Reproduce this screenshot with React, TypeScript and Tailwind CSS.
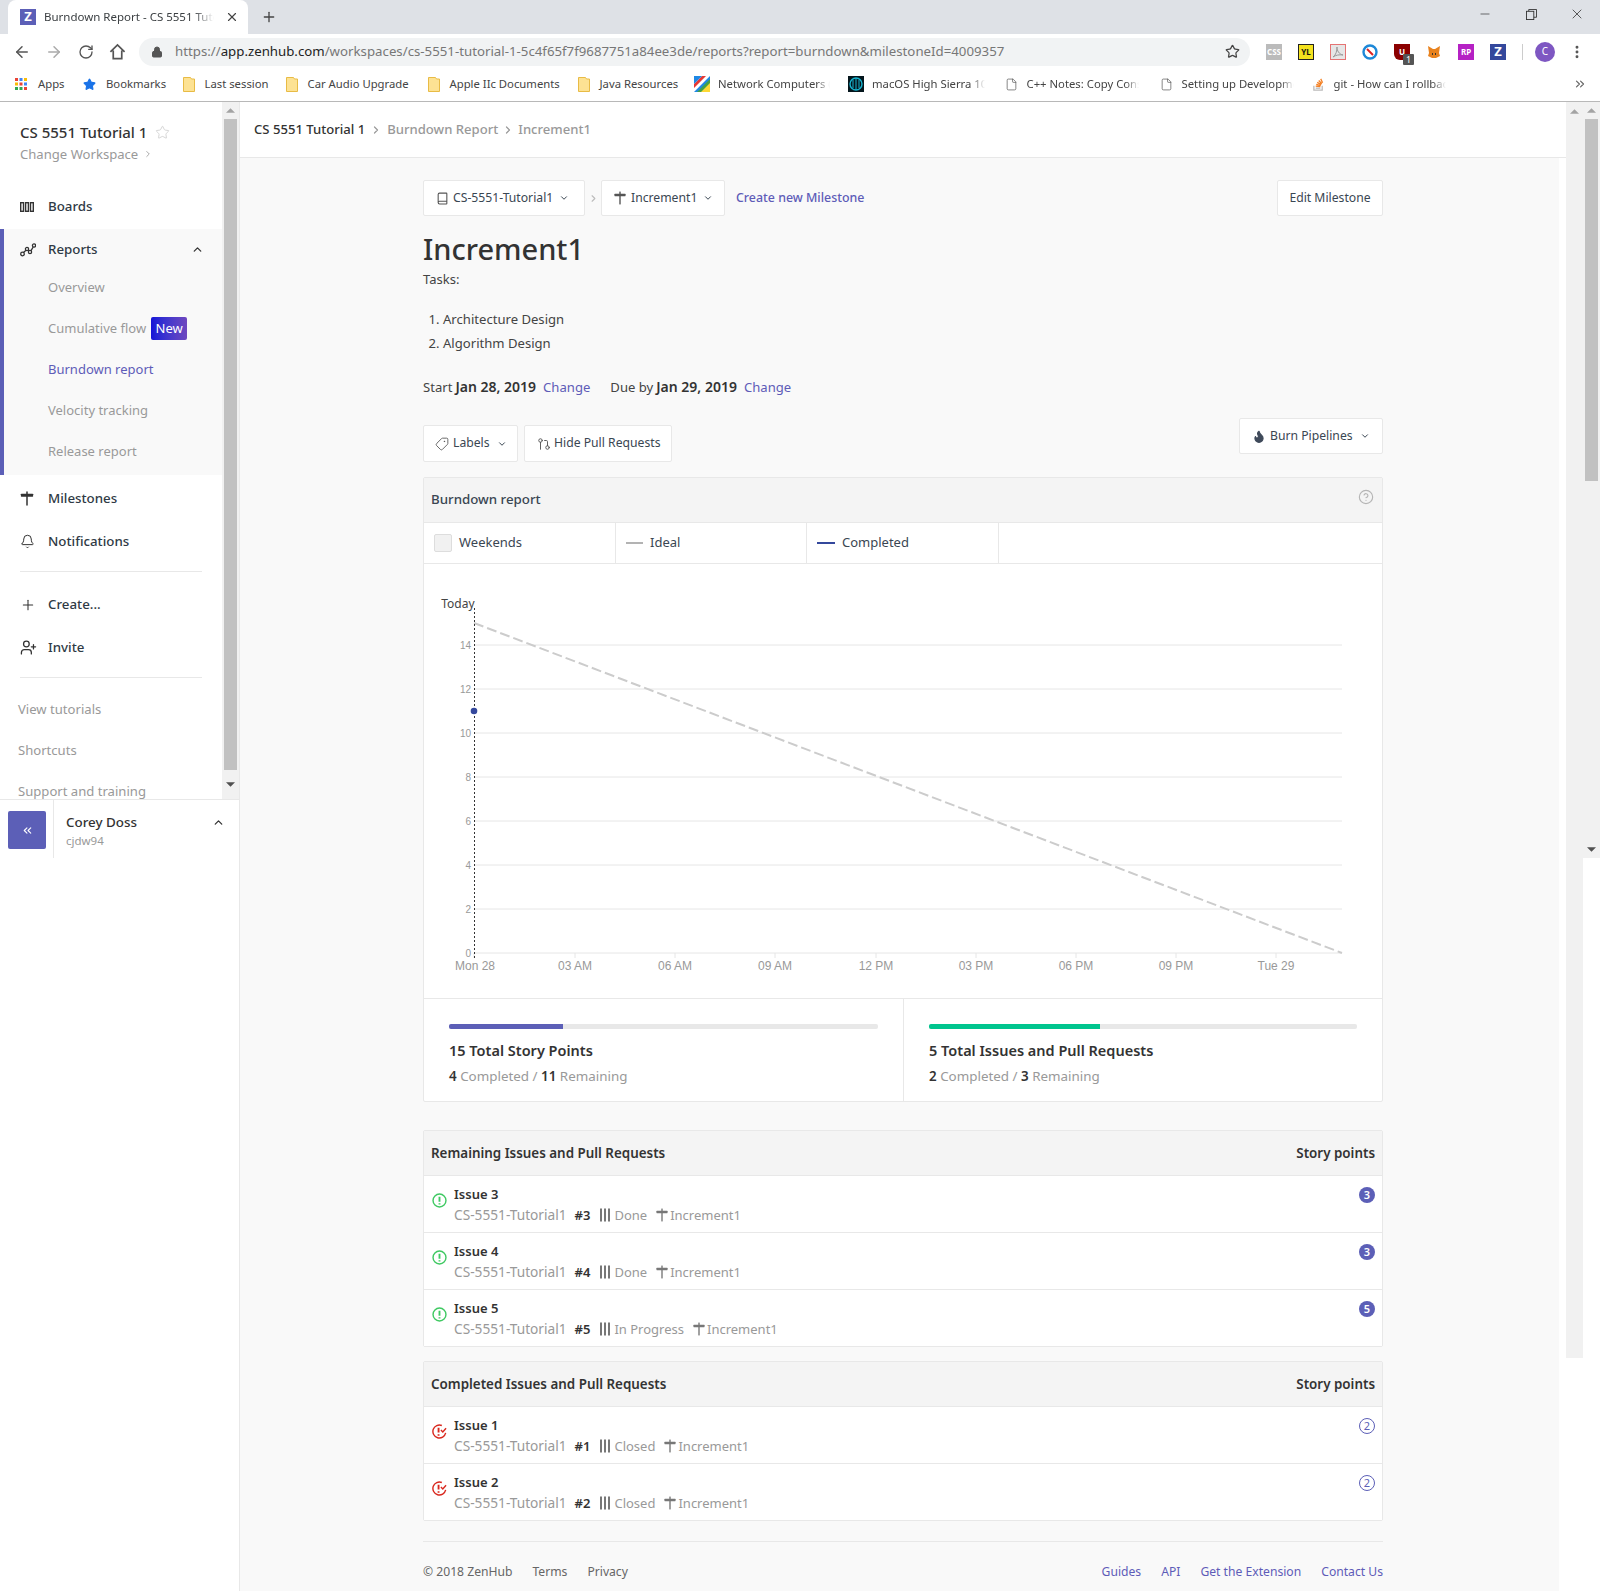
import React from "react";
import { ArrowLeft, ArrowRight, RotateCw, Lock, Star, X, Plus, Minus, ChevronDown, ChevronUp, ChevronRight, File, EllipsisVertical, Book, Tag, GitPullRequest, Flame, Bell, ChevronsLeft, UserPlus, CircleHelp, ChevronsRight } from "lucide-react";

const Signpost = ({ className = "" }: { className?: string }) => (
  <svg viewBox="0 0 14 16" className={className} fill="currentColor"><rect x="0.5" y="3" width="13" height="3" rx="0.5" /><rect x="6.2" y="0.5" width="1.6" height="15" /></svg>
);
const Bars = () => (
  <svg viewBox="0 0 10 14" className="w-[10px] h-[14px] shrink-0" fill="#777"><rect x="0" y="0.5" width="2" height="13" /><rect x="4" y="0.5" width="2" height="13" /><rect x="8" y="0.5" width="2" height="13" /></svg>
);
const OpenIcon = () => (
  <svg viewBox="0 0 16 16" className="w-[15px] h-[15px]" fill="none" stroke="#3fc962" strokeWidth="1.5"><circle cx="8" cy="8" r="6.9" /><path d="M8 4v5.2M8 10.8v1.5" strokeWidth="2" /></svg>
);
const ClosedIcon = () => (
  <svg viewBox="0 0 16 16" className="w-[15px] h-[15px]" fill="none" stroke="#d9281e" strokeWidth="1.5"><path d="M14.6 9.5A6.9 6.9 0 1 1 10.5 1.6" /><path d="M7 4v5M7 10.8v1.6" strokeWidth="2" /><path d="M9.5 6.5l2 2 3.5-4" /></svg>
);
const BmFolder = () => (
  <svg viewBox="0 0 12 15" className="w-[12px] h-[15px] shrink-0"><path d="M0.5 0.5h7l1 1.5h3v12.5h-11z" fill="#fde293" stroke="#e8bb45" /></svg>
);

const bookmarks = [
  { t: "Last session", w: "w-[103px]", tw: "w-[70px]" },
  { t: "Car Audio Upgrade", w: "w-[142px]", tw: "w-[110px]" },
  { t: "Apple IIc Documents", w: "w-[150px]", tw: "w-[118px]" },
  { t: "Java Resources", w: "w-[116.5px]", tw: "w-[90px]" },
];
const fade = "overflow-hidden [mask-image:linear-gradient(to_right,black_88%,transparent)]";

const Bookmarks = () => (
  <div className="h-[32px] flex items-center text-[11.3px] text-[#444] whitespace-nowrap border-b border-[#b8b8b8] pl-[15px] pb-[1px] box-content">
    <div className="w-[68px] flex items-center gap-[11px]">
      <svg viewBox="0 0 12 12" className="w-[12px] h-[12px]">
        {[0, 4.5, 9].map((x, i) => [0, 4.5, 9].map((y, j) => (
          <rect key={`${i}${j}`} x={x} y={y} width="3" height="3" fill={["#ea4335", "#fbbc05", "#34a853", "#4285f4", "#ea4335", "#34a853", "#fbbc05", "#4285f4", "#ea4335"][i * 3 + j]} />
        )))}
      </svg>
      <span>Apps</span>
    </div>
    <div className="w-[99.5px] flex items-center gap-[10px]">
      <Star className="w-[13px] h-[13px] text-[#1a73e8]" fill="#1a73e8" />
      <span>Bookmarks</span>
    </div>
    {bookmarks.map((b) => (
      <div key={b.t} className={`${b.w} flex items-center gap-[10px]`}>
        <BmFolder />
        <span className={`${b.tw}`}>{b.t}</span>
      </div>
    ))}
    <div className="w-[154px] flex items-center gap-[8px]">
      <svg viewBox="0 0 16 16" className="w-[16px] h-[16px] shrink-0"><rect width="16" height="16" fill="#fff" /><path d="M0 16V8L8 0h4L0 12z" fill="#e53935" /><path d="M0 8L8 0H0z" fill="#1e88e5" /><path d="M0 16L16 0v6L6 16z" fill="#1e88e5" /><path d="M6 16L16 6v10z" fill="#fdd835" /><path d="M3 16L16 3v4L7 16z" fill="#43a047" /></svg>
      <span className={`w-[112px] ${fade}`}>Network Computers (</span>
    </div>
    <div className="w-[156.5px] flex items-center gap-[8px]">
      <svg viewBox="0 0 16 16" className="w-[16px] h-[16px] shrink-0"><rect width="16" height="16" fill="#04151c" /><circle cx="8" cy="8" r="6" fill="none" stroke="#16b4cf" strokeWidth="1.4" /><path d="M8 2v12M5 4v8M11 4v8" stroke="#16b4cf" /></svg>
      <span className={`w-[113px] ${fade}`}>macOS High Sierra 10.13</span>
    </div>
    <div className="w-[155px] flex items-center gap-[9px]">
      <File className="w-[13px] h-[15px] text-[#555] shrink-0" strokeWidth={1.3} />
      <span className={`w-[112px] ${fade}`}>C++ Notes: Copy Constructor</span>
    </div>
    <div className="w-[152px] flex items-center gap-[9px]">
      <File className="w-[13px] h-[15px] text-[#555] shrink-0" strokeWidth={1.3} />
      <span className={`w-[112px] ${fade}`}>Setting up Development</span>
    </div>
    <div className="w-[261px] flex items-center gap-[9px]">
      <svg viewBox="0 0 14 16" className="w-[13px] h-[16px] shrink-0" fill="none" strokeWidth="1.4"><path d="M2 10v4.5h9V10" stroke="#bcbbbb" /><path d="M4 12.5h5" stroke="#bcbbbb" /><path d="M4 10.3l5 .6M4.6 8.3l4.8 1.4M5.6 6.2l4.4 2.4M7.2 4.3l3.4 3.4M9.4 2.5l2 4.2" stroke="#f48024" /></svg>
      <span className={`w-[112px] ${fade}`}>git - How can I rollback a</span>
    </div>
    <ChevronsRight className="w-[14px] h-[14px] text-[#666]" />
  </div>
);

const Ext = ({ children, cls }: { children?: React.ReactNode; cls: string }) => (
  <div className={`w-[16px] h-[16px] flex items-center justify-center text-[8px] font-bold leading-none ${cls}`}>{children}</div>
);

const BrowserChrome = () => (
  <div className="shrink-0">
    <div className="h-[34px] bg-[#dee1e6] flex items-stretch pl-[8px] relative">
      <div className="w-[240px] bg-white rounded-t-[8px] flex items-center pl-[12px] pr-[9px] text-[11.5px] text-[#3c4043] whitespace-nowrap">
        <div className="w-[16px] h-[16px] bg-[#5c5fb7] text-white text-[13px] font-bold flex items-center justify-center shrink-0">Z</div>
        <span className={`ml-[8px] w-[170px] ${fade}`}>Burndown Report - CS 5551 Tutorial 1</span>
        <X className="w-[14px] h-[14px] text-[#444] ml-[11px] shrink-0" />
      </div>
      <Plus className="w-[16px] h-[16px] text-[#444] ml-[13px] self-center" />
      <div className="ml-auto flex items-center pb-[6px] text-[#333]">
        <Minus className="w-[14px] h-[14px]" strokeWidth={1.2} />
        <svg viewBox="0 0 12 12" className="w-[11px] h-[11px] ml-[34px]" fill="none" stroke="currentColor"><rect x="0.5" y="2.5" width="8" height="9" /><path d="M3 2.5V.5h8.5v8.5h-3" /></svg>
        <X className="w-[16px] h-[16px] ml-[32px] mr-[15px]" strokeWidth={1.2} />
      </div>
    </div>
    <div className="h-[34px] bg-white flex items-center text-[#555] pt-[1px]">
      <ArrowLeft className="w-[18px] h-[18px] ml-[13px]" strokeWidth={2} />
      <ArrowRight className="w-[18px] h-[18px] ml-[14px] text-[#aaa]" strokeWidth={2} />
      <RotateCw className="w-[16px] h-[16px] ml-[15px]" strokeWidth={2} />
      <svg viewBox="0 0 18 18" className="w-[17px] h-[17px] ml-[15px]" fill="none" stroke="currentColor" strokeWidth="1.8"><path d="M1.5 9.5L9 2l7.5 7.5M4.5 8v8.5h9V8" /></svg>
      <div className="ml-[13px] w-[1111px] h-[28px] rounded-full bg-[#f1f3f4] flex items-center pl-[12px] text-[13.25px] whitespace-nowrap">
        <Lock className="w-[12px] h-[12px] text-[#555] shrink-0" fill="#555" />
        <span className="ml-[12px] text-[#777]">https://<span className="text-[#222]">app.zenhub.com</span>/workspaces/cs-5551-tutorial-1-5c4f65f7f9687751a84ee3de/reports?report=burndown&amp;milestoneId=4009357</span>
        <Star className="w-[15px] h-[15px] ml-auto mr-[10px] text-[#444] shrink-0" />
      </div>
      <div className="flex items-center gap-[16px] ml-[16px]">
        <Ext cls="bg-[#bbb] text-white">CSS</Ext>
        <Ext cls="bg-[#f4e21e] text-[#111] border border-[#222]">YL</Ext>
        <svg viewBox="0 0 16 16" className="w-[16px] h-[16px]"><rect x="0.5" y="0.5" width="15" height="15" fill="#e6e6e6" stroke="#e57373" /><path d="M3 13c3-2 4-6 4-10 0 4 2 7 6 8-4-.5-7 0-10 2z" fill="none" stroke="#999" /></svg>
        <svg viewBox="0 0 16 16" className="w-[16px] h-[16px]" fill="none"><circle cx="8" cy="8" r="6.5" stroke="#1d88d8" strokeWidth="2.4" /><circle cx="8" cy="8" r="4.6" fill="#fff" /><path d="M5 5l6 6" stroke="#d22" strokeWidth="2" /></svg>
        <div className="relative">
          <Ext cls="bg-[#8b0000] text-white rounded-b-[6px]">U</Ext>
          <span className="absolute left-[9px] top-[10px] w-[11px] h-[11px] bg-[#555] text-white text-[9px] leading-[11px] text-center rounded-[1px]">1</span>
        </div>
        <svg viewBox="0 0 16 16" className="w-[16px] h-[16px]"><path d="M2 2l5 3h2l5-3-1 7 1 3-4 2H6l-4-2 1-3z" fill="#e8821e" /><path d="M6 9h1v2H6zM9 9h1v2H9z" fill="#333" /></svg>
        <Ext cls="bg-[#b521c4] text-white">RP</Ext>
        <Ext cls="bg-[#34489c] text-white !text-[13px]">Z</Ext>
      </div>
      <div className="w-px h-[16px] bg-[#ccc] ml-[16px]" />
      <div className="w-[20px] h-[20px] rounded-full bg-[#7e57c2] text-white text-[10px] flex items-center justify-center ml-[12px]">C</div>
      <EllipsisVertical className="w-[16px] h-[16px] text-[#555] ml-[14px]" strokeWidth={2.4} />
    </div>
    <Bookmarks />
  </div>
);

const Arrow = ({ up, cls = "" }: { up?: boolean; cls?: string }) => (
  <svg viewBox="0 0 10 5" className={`w-[9px] h-[5px] ${cls}`} fill={up ? "#a3a3a3" : "#505050"}><path d={up ? "M5 0l5 5H0z" : "M0 0h10L5 5z"} /></svg>
);

const NavRow = ({ icon, label, cls = "h-[43px]" }: { icon: React.ReactNode; label: string; cls?: string }) => (
  <div className={`flex items-center pl-[20px] font-medium text-[13.3px] text-[#2f3a45] ${cls}`}>
    <span className="w-[28px] flex items-center text-[#333]">{icon}</span>
    {label}
  </div>
);

const Sub = ({ children, cls = "text-[#999]" }: { children: React.ReactNode; cls?: string }) => (
  <div className={`h-[41px] flex items-center pl-[44px] text-[13px] ${cls}`}>{children}</div>
);

const Sidebar = () => (
  <aside className="w-[239px] shrink-0 border-r border-[#e8e8e8] box-content bg-white flex flex-col">
    <div className="h-[697px] flex overflow-hidden">
      <div className="w-[222px] shrink-0">
        <div className="h-[84px] pl-[20px] pt-[19px]">
          <div className="flex items-center text-[15px] font-medium text-[#333] leading-[23px]">
            CS 5551 Tutorial 1
            <Star className="w-[15px] h-[15px] ml-[8px] text-[#ccc]" strokeWidth={1.3} />
          </div>
          <div className="flex items-center text-[13.1px] text-[#999] leading-[20px]">
            Change Workspace
            <ChevronRight className="w-[10px] h-[10px] ml-[5px]" />
          </div>
        </div>
        <NavRow label="Boards" cls="h-[43px] pb-[2px]" icon={
          <svg viewBox="0 0 14 10" className="w-[14px] h-[10px]" fill="none" stroke="#333" strokeWidth="1.4"><rect x="0.7" y="0.7" width="2.8" height="8.6" /><rect x="5.6" y="0.7" width="2.8" height="8.6" /><rect x="10.5" y="0.7" width="2.8" height="8.6" /></svg>
        } />
        <div className="h-[246px] border-l-[4px] border-[#5c5fb7] bg-[#f9f9f9]">
          <div className="h-[38px] pt-[3px] flex items-center -ml-[4px] pr-[18px]">
            <NavRow label="Reports" cls="flex-1 h-[38px]" icon={
              <svg viewBox="0 0 16 14" className="w-[16px] h-[14px]" fill="none" stroke="#333" strokeWidth="1.3"><circle cx="2.5" cy="11" r="1.8" /><circle cx="7" cy="6" r="1.6" /><circle cx="10" cy="9" r="1.6" /><circle cx="14" cy="2.5" r="1.6" /><path d="M3.5 9.5L6 7.3M8 7.2l1 .8M11 7.6l2.2-3.6" /></svg>
            } />
            <ChevronUp className="w-[13px] h-[13px] text-[#333]" strokeWidth={2.4} />
          </div>
          <Sub>Overview</Sub>
          <Sub>
            Cumulative flow
            <span className="ml-[5px] w-[36px] h-[23px] rounded-[2px] bg-gradient-to-r from-[#1412d8] to-[#6f47bf] text-white flex items-center justify-center">New</span>
          </Sub>
          <Sub cls="text-[#5e5cb8]">Burndown report</Sub>
          <Sub>Velocity tracking</Sub>
          <Sub>Release report</Sub>
        </div>
        <div className="h-[2px]" />
        <NavRow label="Milestones" icon={<Signpost className="w-[14px] h-[15px]" />} />
        <NavRow label="Notifications" icon={<Bell className="w-[15px] h-[15px]" strokeWidth={1.6} />} />
        <div className="mx-[20px] h-px bg-[#e8e8e8] mt-[8px]" />
        <div className="h-[11px]" />
        <NavRow label="Create..." icon={<Plus className="w-[16px] h-[16px]" strokeWidth={1.6} />} />
        <NavRow label="Invite" icon={<UserPlus className="w-[17px] h-[17px]" strokeWidth={1.8} />} />
        <div className="mx-[20px] h-px bg-[#e8e8e8] mt-[8px]" />
        <div className="pl-[18px] text-[13.1px] text-[#999] pt-[11px]">
          <div className="h-[41px] flex items-center">View tutorials</div>
          <div className="h-[41px] flex items-center">Shortcuts</div>
          <div className="h-[41px] flex items-center">Support and training</div>
        </div>
      </div>
      <div className="w-[17px] bg-[#f1f1f1] flex flex-col items-center">
        <div className="h-[17px] flex items-center"><Arrow up /></div>
        <div className="w-[13px] h-[651px] bg-[#c1c1c1]" />
        <div className="flex-1 flex items-center"><Arrow /></div>
      </div>
    </div>
    <div className="h-[59px] border-t border-[#e8e8e8] flex">
      <div className="w-[54px] border-r border-[#e8e8e8] pl-[8px] pt-[11px]">
        <div className="w-[38px] h-[38px] rounded-[2px] bg-[#5c5fb7] flex items-center justify-center text-white">
          <ChevronsLeft className="w-[13px] h-[13px]" />
        </div>
      </div>
      <div className="flex-1 pl-[12px] pt-[12px]">
        <div className="flex items-center text-[13.4px] font-medium text-[#333] leading-[20px] pr-[14px] justify-between">
          Corey Doss
          <ChevronUp className="w-[13px] h-[13px]" strokeWidth={2.4} />
        </div>
        <div className="text-[11.5px] text-[#999] leading-[18px]">cjdw94</div>
      </div>
    </div>
  </aside>
);

const BtnBox = ({ children, cls }: { children: React.ReactNode; cls: string }) => (
  <div className={`h-[36px] bg-white border border-[#e8e8e8] rounded-[2px] flex items-center text-[12.2px] text-[#3a4652] whitespace-nowrap ${cls}`}>{children}</div>
);

const Chart = () => {
  const grid = [14, 12, 10, 8, 6, 4, 2, 0];
  const xs: [number, string][] = [[474, "Mon 28"], [575, "03 AM"], [675, "06 AM"], [775, "09 AM"], [876, "12 PM"], [976, "03 PM"], [1076, "06 PM"], [1176, "09 PM"], [1276, "Tue 29"]];
  return (
    <svg viewBox="424 564 958 434" className="w-[958px] h-[434px] block">
      <text x="474.5" y="608" textAnchor="end" fontSize="12" fill="#444" fontFamily="Noto Sans">Today</text>
      {grid.map((v) => {
        const y = 953 - v * 22;
        return (
          <g key={v}>
            <line x1="474" x2="1342" y1={y} y2={y} stroke="#e6e6e6" />
            <text x="471" y={y + 3.5} textAnchor="end" fontSize="10" fill="#999" fontFamily="Liberation Sans">{v}</text>
          </g>
        );
      })}
      {xs.map(([x, l], i) => (
        <g key={l}>
          <line x1={x} x2={x} y1="953" y2="958" stroke="#e6e6e6" />
          <text x={i === 0 ? x + 1 : x} y="970" textAnchor="middle" fontSize="12" fill="#999" fontFamily="Liberation Sans">{l}</text>
        </g>
      ))}
      <line x1="474" y1="623" x2="1342" y2="953" stroke="#cccccc" strokeWidth="2" strokeDasharray="10 4" />
      <line x1="474.5" x2="474.5" y1="608" y2="958" stroke="#333" strokeDasharray="2 2" />
      <circle cx="474" cy="711" r="3.3" fill="#34489c" />
    </svg>
  );
};

const Stat = ({ fill, total, a, b, bar, cls }: { fill: string; total: string; a: string; b: string; bar: string; cls: string }) => (
  <div className={`pl-[25px] pr-[25px] pt-[25px] ${cls}`}>
    <div className="h-[5px] bg-[#e8e8e8] rounded-[2px] overflow-hidden"><div className={`h-full ${fill} ${bar}`} /></div>
    <div className="mt-[10px] text-[14.5px] font-semibold text-[#333] leading-[22px]">{total}</div>
    <div className="mt-[5px] text-[13.4px] text-[#999] leading-[20px]">
      <b className="text-[#333] font-semibold">{a}</b> Completed / <b className="text-[#333] font-semibold">{b}</b> Remaining
    </div>
  </div>
);

type Issue = { title: string; num: string; pipe: string; pts: string };

const IssueRow = ({ it, closed }: { it: Issue; closed?: boolean }) => (
  <div className="h-[57px] border-t border-[#e8e8e8] bg-white flex pl-[8px] pr-[7px] relative">
    <div className="w-[22px] pt-[17px] pl-0">{closed ? <ClosedIcon /> : <OpenIcon />}</div>
    <div className="pt-[8px] flex-1">
      <div className="text-[13px] font-semibold text-[#333] leading-[20px]">{it.title}</div>
      <div className="mt-[1px] flex items-center text-[13px] text-[#999] leading-[20px] whitespace-nowrap">
        <span className="text-[13.7px]">CS-5551-Tutorial1</span>
        <b className="ml-[8px] text-[#333] font-semibold">{it.num}</b>
        <span className="ml-[10px] mr-[4px]"><Bars /></span>
        {it.pipe}
        <Signpost className="w-[12px] h-[14px] ml-[9px] mr-[2px] text-[#777]" />
        Increment1
      </div>
    </div>
    {closed ? (
      <div className="mt-[11px] w-[16px] h-[16px] rounded-full border border-[#5c5fb7] text-[#5c5fb7] text-[11px] flex items-center justify-center">{it.pts}</div>
    ) : (
      <div className="mt-[11px] w-[16px] h-[16px] rounded-full bg-[#5c5fb7] text-white text-[11px] font-semibold flex items-center justify-center">{it.pts}</div>
    )}
  </div>
);

const IssuePanel = ({ title, items, closed, cls }: { title: string; items: Issue[]; closed?: boolean; cls: string }) => (
  <div className={`border border-[#e8e8e8] rounded-[2px] ${cls}`}>
    <div className="h-[44px] bg-[#f4f4f4] flex items-center justify-between px-[7px] text-[13.4px] font-semibold text-[#333]">
      <span>{title}</span><span>Story points</span>
    </div>
    {items.map((i) => <IssueRow key={i.num} it={i} closed={closed} />)}
  </div>
);

const Main = () => (
  <main className="w-[1319px] shrink-0 bg-[#f9f9f9]">
    <div className="h-[56px] bg-white border-b border-[#e8e8e8] flex items-center pl-[14px] text-[13.1px] font-medium text-[#999] w-[1326px] relative">
      <span className="text-[#333]">CS 5551 Tutorial 1</span>
      <ChevronRight className="w-[12px] h-[12px] mx-[5px]" strokeWidth={2.4} />
      <span>Burndown Report</span>
      <ChevronRight className="w-[12px] h-[12px] mx-[4px]" strokeWidth={2.4} />
      <span>Increment1</span>
    </div>
    <div className="ml-[183px] w-[960px] pt-[22px]">
      <div className="flex items-center">
        <BtnBox cls="w-[162px] pl-[12px]">
          <Book className="w-[13px] h-[13px] text-[#555] mr-[4px]" />CS-5551-Tutorial1
          <ChevronDown className="w-[10px] h-[10px] ml-[6px]" strokeWidth={2.4} />
        </BtnBox>
        <ChevronRight className="w-[11px] h-[11px] text-[#bbb] mx-[2.5px]" strokeWidth={2.4} />
        <BtnBox cls="w-[124px] pl-[12px]">
          <Signpost className="w-[12px] h-[14px] text-[#555] mr-[5px]" />Increment1
          <ChevronDown className="w-[10px] h-[10px] ml-[6px]" strokeWidth={2.4} />
        </BtnBox>
        <span className="ml-[11px] text-[12.4px] font-medium text-[#5e5cb8]">Create new Milestone</span>
        <BtnBox cls="ml-auto w-[106px] justify-center">Edit Milestone</BtnBox>
      </div>
      <h1 className="mt-[11px] text-[29px] font-medium text-[#333] leading-[44px]">Increment1</h1>
      <p className="text-[13px] text-[#444] leading-[20px] -mt-[2px]">Tasks:</p>
      <ol className="mt-[18px] pl-[20px] list-decimal text-[13.1px] text-[#444] leading-[24px]">
        <li>Architecture Design</li>
        <li>Algorithm Design</li>
      </ol>
      <div className="mt-[22px] flex text-[13.1px] text-[#444] leading-[20px]">
        <span>Start</span><b className="ml-[3px] text-[14px] font-semibold text-[#333]">Jan 28, 2019</b>
        <span className="ml-[7px] text-[#5e5cb8]">Change</span>
        <span className="ml-[20px]">Due by</span><b className="ml-[3px] text-[14px] font-semibold text-[#333]">Jan 29, 2019</b>
        <span className="ml-[7px] text-[#5e5cb8]">Change</span>
      </div>
      <div className="mt-[21px] h-[45px] flex items-start">
        <BtnBox cls="mt-[7px] !h-[37px] w-[95px] pl-[11px]">
          <Tag className="w-[14px] h-[14px] text-[#555] mr-[4px] -scale-x-100" strokeWidth={1.5} />Labels
          <ChevronDown className="w-[10px] h-[10px] ml-[7px]" strokeWidth={2.4} />
        </BtnBox>
        <BtnBox cls="mt-[7px] !h-[37px] w-[148px] ml-[6px] pl-[12px]">
          <GitPullRequest className="w-[14px] h-[14px] text-[#555] mr-[3px]" strokeWidth={1.6} />Hide Pull Requests
        </BtnBox>
        <BtnBox cls="ml-auto w-[144px] pl-[12px]">
          <Flame className="w-[14px] h-[15px] text-[#3f4a5a] mr-[4px]" fill="#3f4a5a" />Burn Pipelines
          <ChevronDown className="w-[10px] h-[10px] ml-[7px]" strokeWidth={2.4} />
        </BtnBox>
      </div>
      <div className="mt-[14px] border border-[#e8e8e8] rounded-[2px] bg-white">
        <div className="h-[44px] bg-[#f4f4f4] flex items-center justify-between pl-[7px] pr-[8px] text-[13.3px] font-medium text-[#3a4652]">
          <span>Burndown report</span>
          <CircleHelp className="w-[16px] h-[16px] text-[#b5b5b5] mb-[6px]" strokeWidth={1.7} />
        </div>
        <div className="h-[42px] border-y border-[#e8e8e8] flex text-[13px] text-[#3a4652]">
          <div className="w-[192px] border-r border-[#e8e8e8] flex items-center pl-[10px]">
            <span className="w-[18px] h-[18px] bg-[#f1f1f1] border border-[#dddddd] rounded-[2px] mr-[7px]" />Weekends
          </div>
          <div className="w-[191px] border-r border-[#e8e8e8] flex items-center pl-[10px]">
            <span className="w-[17px] h-[2px] bg-[#b3b3b3] mr-[7px]" />Ideal
          </div>
          <div className="w-[192px] border-r border-[#e8e8e8] flex items-center pl-[10px]">
            <span className="w-[18px] h-[2px] bg-[#34489c] mr-[7px]" />Completed
          </div>
        </div>
        <Chart />
        <div className="h-[103px] border-t border-[#e8e8e8] flex">
          <Stat cls="w-[480px] border-r border-[#e8e8e8]" fill="bg-[#5c5fb7]" bar="w-[26.6%]" total="15 Total Story Points" a="4" b="11" />
          <Stat cls="flex-1" fill="bg-[#00c58e]" bar="w-[40%]" total="5 Total Issues and Pull Requests" a="2" b="3" />
        </div>
      </div>
      <IssuePanel cls="mt-[28px]" title="Remaining Issues and Pull Requests" items={[
        { title: "Issue 3", num: "#3", pipe: "Done", pts: "3" },
        { title: "Issue 4", num: "#4", pipe: "Done", pts: "3" },
        { title: "Issue 5", num: "#5", pipe: "In Progress", pts: "5" },
      ]} />
      <IssuePanel cls="mt-[14px]" closed title="Completed Issues and Pull Requests" items={[
        { title: "Issue 1", num: "#1", pipe: "Closed", pts: "2" },
        { title: "Issue 2", num: "#2", pipe: "Closed", pts: "2" },
      ]} />
      <div className="mt-[20px] border-t border-[#e8e8e8] pt-[20px] flex text-[12.15px] text-[#666] leading-[20px]">
        <span>© 2018 ZenHub</span><span className="ml-[20px]">Terms</span><span className="ml-[20px]">Privacy</span>
        <div className="ml-auto flex gap-[20px] text-[#5e5cb8]">
          <span>Guides</span><span>API</span><span>Get the Extension</span><span>Contact Us</span>
        </div>
      </div>
    </div>
  </main>
);

export default function App() {
  return (
    <div className="w-[1600px] h-[1591px] overflow-hidden bg-white flex flex-col font-['Noto_Sans',sans-serif]">
      <BrowserChrome />
      <div className="flex flex-1 min-h-0">
        <Sidebar />
        <Main />
        <div className="w-[7px] shrink-0" />
        <div className="w-[17px] h-[1256px] bg-[#f1f1f1] flex justify-center shrink-0 pt-[7px]"><Arrow up /></div>
        <div className="w-[17px] h-[756px] bg-[#f1f1f1] flex flex-col items-center shrink-0">
          <div className="h-[17px] flex items-center"><Arrow up /></div>
          <div className="w-[13px] h-[362px] bg-[#c1c1c1]" />
          <div className="flex-1 flex items-end pb-[6px]"><Arrow /></div>
        </div>
      </div>
    </div>
  );
}
